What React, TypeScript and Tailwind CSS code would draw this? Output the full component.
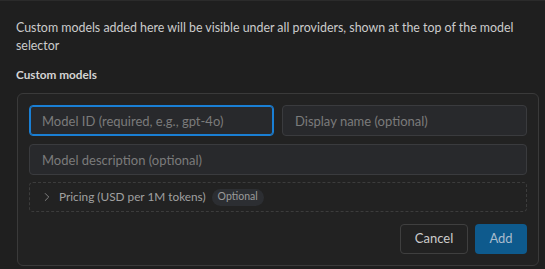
import { ChevronRight } from 'lucide-react';

export default function App() {
  return (
    <div
      className="h-[269px] overflow-hidden bg-[#1f1f1f] border-t border-[#2b2b2b] pl-4 pr-[6px] pt-[18px] text-[#cccccc]"
      style={{ fontFamily: 'Lato, "Noto Sans", sans-serif' }}
    >
      {/* Description */}
      <p className="text-[12.4px] leading-[18px]">
        Custom models added here will be visible under all providers, shown at the top of the model selector
      </p>

      <h3 className="mt-3 text-[11.75px] leading-4 font-bold text-[#d4d4d4]">Custom models</h3>

      {/* Card */}
      <div className="mt-[10px] ml-[1px] rounded-md border border-[#3a3a3a] bg-[#222222] p-[11px]">
        <div className="grid grid-cols-2 gap-2">
          <input
            className="h-[31px] rounded border border-[#1a7fd4] ring-1 ring-inset ring-[#1a7fd4] bg-[#28292c] px-3 text-[13px] text-[#cccccc] placeholder:text-[#7b7b7b] outline-none"
            placeholder="Model ID (required, e.g., gpt-4o)"
          />
          <input
            className="h-[31px] rounded border border-[#3a3b3e] bg-[#28292c] px-3 text-[13px] text-[#cccccc] placeholder:text-[#7b7b7b] outline-none"
            placeholder="Display name (optional)"
          />
        </div>
        <input
          className="mt-2 block w-full h-[31px] rounded border border-[#3a3b3e] bg-[#28292c] px-3 text-[13px] text-[#cccccc] placeholder:text-[#7b7b7b] outline-none"
          placeholder="Model description (optional)"
        />

        {/* Pricing */}
        <div className="mt-[7px] h-[30px] rounded border border-dashed border-[#3c3c3c] flex items-center pl-[10px] gap-[5px]">
          <ChevronRight size={14} strokeWidth={1.5} className="text-[#8c8c8c]" />
          <span className="text-[11.8px] text-[#a0a0a0]">Pricing (USD per 1M tokens)</span>
          <span className="ml-[1px] h-[17px] flex items-center rounded-full bg-[#2c2e32] px-[6px] text-[10.5px] text-[#9a9a9a]">
            Optional
          </span>
        </div>

        {/* Actions */}
        <div className="mt-3 flex justify-end gap-[7px]">
          <button className="h-[30px] w-[68px] rounded border border-[#3f3f3f] text-[13px] text-[#cccccc]">
            Cancel
          </button>
          <button className="h-[30px] w-[52px] rounded bg-[#0e5a8d] text-[13px] text-[#a9bccd]">
            Add
          </button>
        </div>
      </div>
    </div>
  );
}
